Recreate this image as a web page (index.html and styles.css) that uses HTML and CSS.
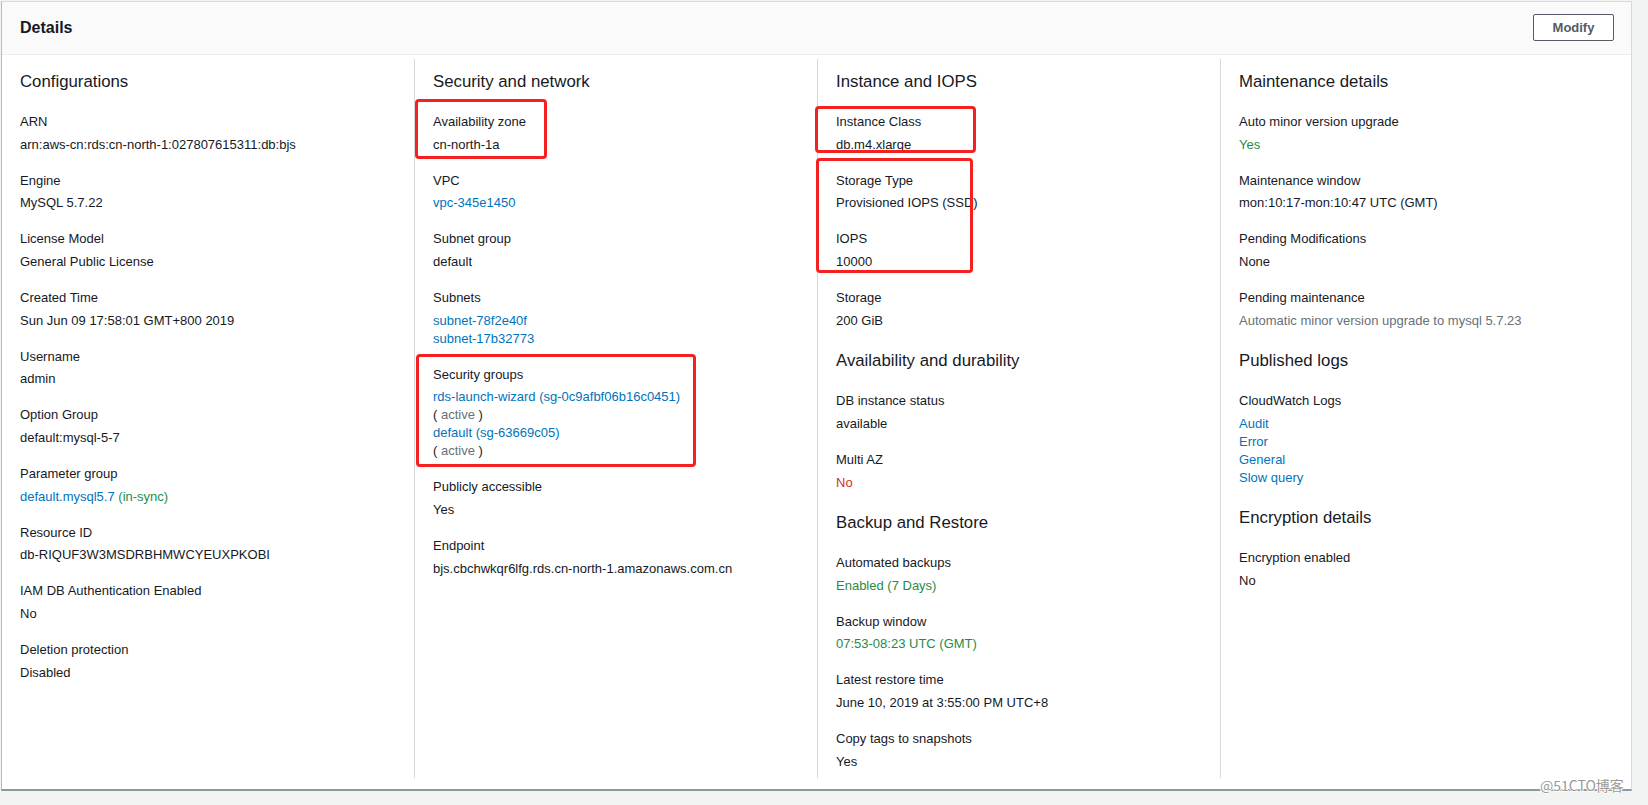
FILE: index.html
```html
<!DOCTYPE html>
<html lang="en">
<head>
<meta charset="utf-8">
<title>Details</title>
<link rel="stylesheet" href="styles.css">
</head>
<body>
<div class="card">
  <div class="card-header">
    <h2 class="card-title">Details</h2>
    <button class="btn">Modify</button>
  </div>
  <div class="card-body">
    <div class="col">
      <h3 class="sec-title">Configurations</h3>
      <div class="item"><div class="key">ARN</div><div class="val">arn:aws-cn:rds:cn-north-1:027807615311:db:bjs</div></div>
      <div class="item"><div class="key">Engine</div><div class="val">MySQL 5.7.22</div></div>
      <div class="item"><div class="key">License Model</div><div class="val">General Public License</div></div>
      <div class="item"><div class="key">Created Time</div><div class="val">Sun Jun 09 17:58:01 GMT+800 2019</div></div>
      <div class="item"><div class="key">Username</div><div class="val">admin</div></div>
      <div class="item"><div class="key">Option Group</div><div class="val">default:mysql-5-7</div></div>
      <div class="item"><div class="key">Parameter group</div><div class="val"><a class="link" href="#">default.mysql5.7</a> <span class="ok">(in-sync)</span></div></div>
      <div class="item"><div class="key">Resource ID</div><div class="val">db-RIQUF3W3MSDRBHMWCYEUXPKOBI</div></div>
      <div class="item"><div class="key">IAM DB Authentication Enabled</div><div class="val">No</div></div>
      <div class="item"><div class="key">Deletion protection</div><div class="val">Disabled</div></div>
    </div>

    <div class="col">
      <h3 class="sec-title">Security and network</h3>
      <div class="item mark-wrap"><span class="mark mark-az"></span><div class="key">Availability zone</div><div class="val">cn-north-1a</div></div>
      <div class="item"><div class="key">VPC</div><div class="val"><a class="link" href="#">vpc-345e1450</a></div></div>
      <div class="item"><div class="key">Subnet group</div><div class="val">default</div></div>
      <div class="item"><div class="key">Subnets</div><div class="val"><a class="link" href="#">subnet-78f2e40f</a><br><a class="link" href="#">subnet-17b32773</a></div></div>
      <div class="item mark-wrap"><span class="mark mark-sg"></span><div class="key">Security groups</div>
        <div class="val"><a class="link" href="#">rds-launch-wizard (sg-0c9afbf06b16c0451)</a><br>( <span class="muted">active</span> )<br><a class="link" href="#">default (sg-63669c05)</a><br>( <span class="muted">active</span> )</div></div>
      <div class="item"><div class="key">Publicly accessible</div><div class="val">Yes</div></div>
      <div class="item"><div class="key">Endpoint</div><div class="val">bjs.cbchwkqr6lfg.rds.cn-north-1.amazonaws.com.cn</div></div>
    </div>

    <div class="col">
      <h3 class="sec-title">Instance and IOPS</h3>
      <div class="item mark-wrap"><span class="mark mark-class"></span><div class="key">Instance Class</div><div class="val">db.m4.xlarge</div></div>
      <div class="mark-wrap">
        <span class="mark mark-storage"></span>
        <div class="item"><div class="key">Storage Type</div><div class="val">Provisioned IOPS (SSD)</div></div>
        <div class="item"><div class="key">IOPS</div><div class="val">10000</div></div>
      </div>
      <div class="item"><div class="key">Storage</div><div class="val">200 GiB</div></div>

      <h3 class="sec-title sub">Availability and durability</h3>
      <div class="item"><div class="key">DB instance status</div><div class="val">available</div></div>
      <div class="item"><div class="key">Multi AZ</div><div class="val bad">No</div></div>

      <h3 class="sec-title sub">Backup and Restore</h3>
      <div class="item"><div class="key">Automated backups</div><div class="val ok">Enabled (7 Days)</div></div>
      <div class="item"><div class="key">Backup window</div><div class="val ok">07:53-08:23 UTC (GMT)</div></div>
      <div class="item"><div class="key">Latest restore time</div><div class="val">June 10, 2019 at 3:55:00 PM UTC+8</div></div>
      <div class="item"><div class="key">Copy tags to snapshots</div><div class="val">Yes</div></div>
    </div>

    <div class="col">
      <h3 class="sec-title">Maintenance details</h3>
      <div class="item"><div class="key">Auto minor version upgrade</div><div class="val ok">Yes</div></div>
      <div class="item"><div class="key">Maintenance window</div><div class="val">mon:10:17-mon:10:47 UTC (GMT)</div></div>
      <div class="item"><div class="key">Pending Modifications</div><div class="val">None</div></div>
      <div class="item"><div class="key">Pending maintenance</div><div class="val muted">Automatic minor version upgrade to mysql 5.7.23</div></div>

      <h3 class="sec-title sub">Published logs</h3>
      <div class="item"><div class="key">CloudWatch Logs</div><div class="val"><a class="link" href="#">Audit</a><br><a class="link" href="#">Error</a><br><a class="link" href="#">General</a><br><a class="link" href="#">Slow query</a></div></div>

      <h3 class="sec-title sub">Encryption details</h3>
      <div class="item"><div class="key">Encryption enabled</div><div class="val">No</div></div>
    </div>
  </div>
</div>
<div class="watermark">@51CTO博客</div>
</body>
</html>
```

FILE: styles.css
```css
html, body {
  margin: 0;
  padding: 0;
}
body {
  background: #f2f3f3;
  font-family: "Liberation Sans", Arial, sans-serif;
  color: #16191f;
  width: 1648px;
  height: 805px;
  overflow: hidden;
  position: relative;
}
.card {
  box-sizing: border-box;
  margin: 1px 0 0 1px;
  width: 1631px;
  background: #fff;
  border: 1px solid #d5dbdb;
  border-left-color: #b4bcbc;
  border-bottom: 2px solid #8d9a9b;
}
.card-header {
  box-sizing: border-box;
  height: 53px;
  display: flex;
  align-items: center;
  justify-content: space-between;
  padding: 0 17px 0 18px;
  background: #fafafa;
  border-bottom: 1px solid #eaeded;
}
.card-title {
  margin: 0;
  font-size: 16px;
  line-height: 20px;
  font-weight: bold;
  color: #16191f;
}
.btn {
  box-sizing: border-box;
  width: 81px;
  height: 27px;
  margin-top: -1px;
  background: #fff;
  border: 1px solid #545b64;
  border-radius: 2px;
  font-family: "Liberation Sans", Arial, sans-serif;
  font-size: 13px;
  font-weight: bold;
  color: #545b64;
  padding: 0;
}
.card-body {
  box-sizing: border-box;
  display: grid;
  grid-template-columns: 412px 403px 403px 1fr;
  grid-template-rows: 719px;
  height: 734px;
  padding: 4px 0 11px;
}
.col {
  padding: 12px 10px 0 18px;
  border-left: 1px solid #d5dbdb;
}
.col:first-child {
  border-left: none;
}
.sec-title {
  margin: 0 0 20px;
  font-size: 16.8px;
  line-height: 22px;
  font-weight: normal;
  color: #16191f;
}
.sec-title.sub {
  margin-top: 20.3px;
  margin-bottom: 20.3px;
}
.item {
  margin-bottom: 18px;
  font-size: 13px;
}
.key {
  line-height: 18px;
  margin-bottom: 4.67px;
  color: #16191f;
}
.val {
  line-height: 18px;
  color: #16191f;
}
.link {
  color: #0073bb;
  text-decoration: none;
}
.ok {
  color: #1f8c48;
}
.bad {
  color: #d13212;
}
.muted {
  color: #687078;
}
.mark-wrap {
  position: relative;
}
.mark {
  position: absolute;
  box-sizing: border-box;
  border: 3px solid #f5201f;
  border-radius: 4px;
  pointer-events: none;
}
.mark-az {
  left: -18px;
  top: -14px;
  width: 132px;
  height: 60px;
}
.mark-sg {
  left: -17px;
  top: -12px;
  width: 280px;
  height: 113px;
}
.mark-class {
  left: -21px;
  top: -7px;
  width: 161px;
  height: 47px;
}
.mark-storage {
  left: -20px;
  top: -14px;
  width: 157px;
  height: 115px;
}
.watermark {
  position: absolute;
  left: 1540px;
  top: 776px;
  font-family: "Noto Sans CJK SC", "Liberation Sans", sans-serif;
  font-size: 14px;
  line-height: 18px;
  color: #9a9a9a;
  text-shadow: 0 0 1px #fff, 1px 0 0 #fff, -1px 0 0 #fff, 0 1px 0 #fff, 0 -1px 0 #fff;
  white-space: nowrap;
}
```
